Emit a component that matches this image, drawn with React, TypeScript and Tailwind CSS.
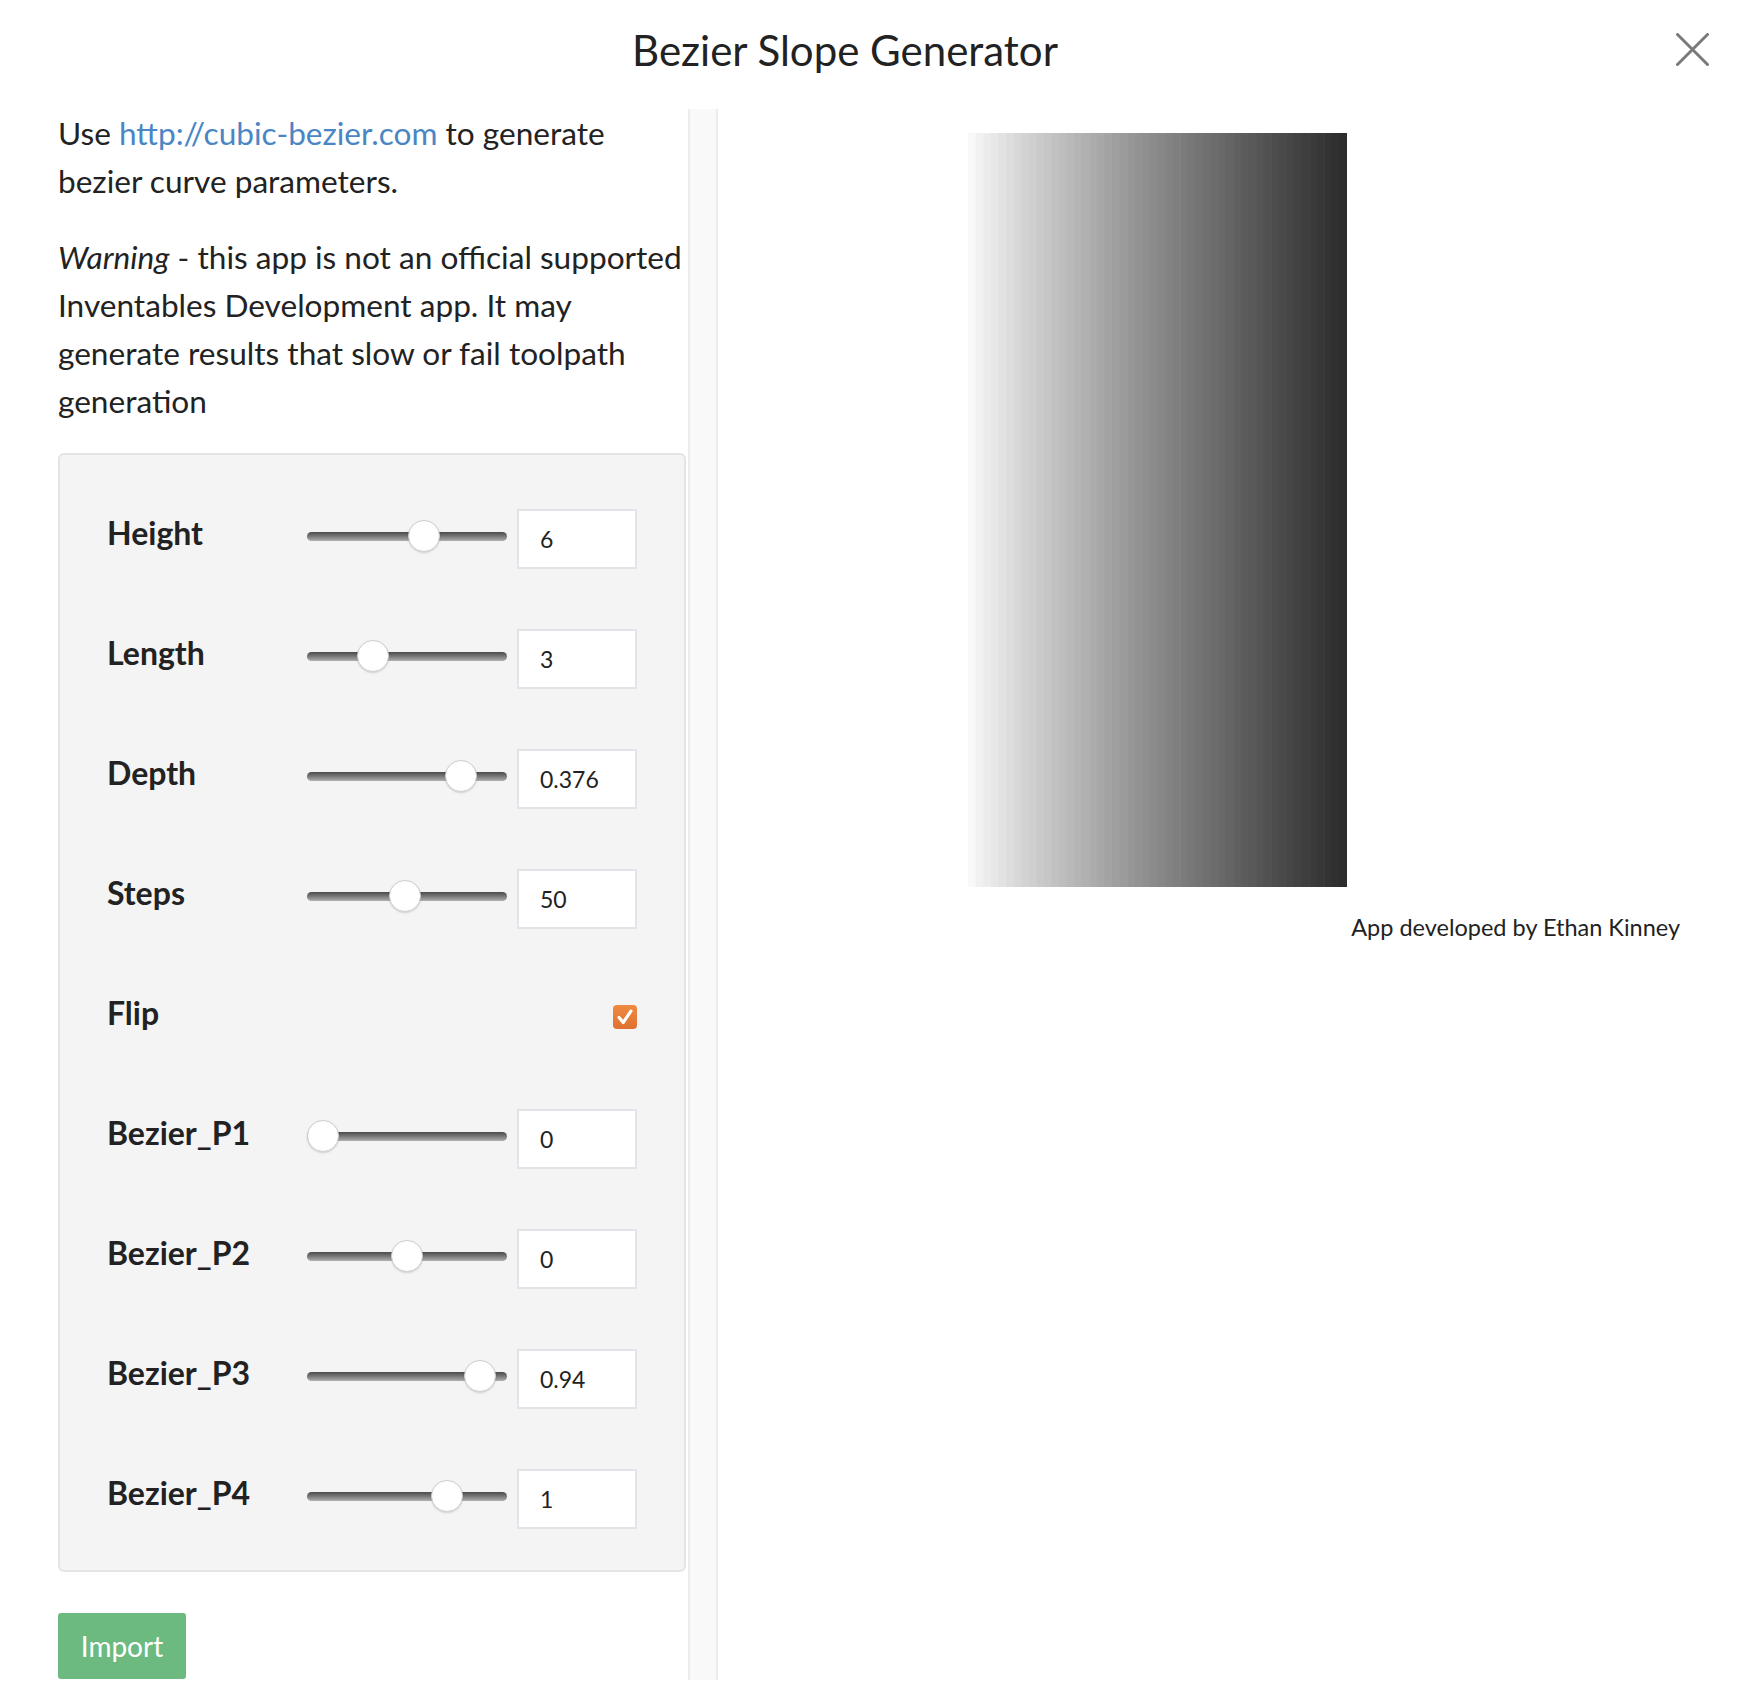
import React from "react";

const rows: { label: string; value?: string; pos?: number; checkbox?: boolean }[] = [
  { label: "Height", value: "6", pos: 0.6 },
  { label: "Length", value: "3", pos: 0.3 },
  { label: "Depth", value: "0.376", pos: 0.82 },
  { label: "Steps", value: "50", pos: 0.49 },
  { label: "Flip", checkbox: true },
  { label: "Bezier_P1", value: "0", pos: 0 },
  { label: "Bezier_P2", value: "0", pos: 0.5 },
  { label: "Bezier_P3", value: "0.94", pos: 0.935 },
  { label: "Bezier_P4", value: "1", pos: 0.74 },
];

function Slider({ pos }: { pos: number }) {
  return (
    <div className="relative w-[200px] h-[32px] mb-[6px] flex items-center">
      <div className="w-full h-[9px] rounded-full bg-gradient-to-b from-[#4a4a4a] to-[#b0b0b0]" />
      <div
        className="absolute top-0 w-[32px] h-[32px] rounded-full bg-white border border-[#cfcfcf] shadow-[0_1px_2px_rgba(0,0,0,0.15)]"
        style={{ left: `${pos * 168}px` }}
      />
    </div>
  );
}

function GradientBox() {
  const steps = 50;
  const w = 379;
  const h = 754;
  const rects = [];
  for (let i = 0; i < steps; i++) {
    const t = i / (steps - 1);
    const f = Math.pow(t, 0.88);
    const v = Math.round(248 - (248 - 44) * f);
    rects.push(
      <rect
        key={i}
        x={(i * w) / steps}
        y={0}
        width={w / steps + 0.6}
        height={h}
        fill={`rgb(${v},${v},${v})`}
      />
    );
  }
  return (
    <svg width={w} height={h} viewBox={`0 0 ${w} ${h}`} className="block">
      {rects}
    </svg>
  );
}

export default function App() {
  return (
    <div
      className="w-[1738px] min-h-[1706px] bg-white text-[#222]"
      style={{ fontFamily: "Lato, 'Open Sans', sans-serif" }}
    >
      <div className="relative h-[109px] flex items-center justify-center pb-[8px] pr-[48px]">
        <h1 className="text-[42px] font-normal text-[#222]">Bezier Slope Generator</h1>
        <button className="absolute right-[29px] top-[33px] w-[33px] h-[33px]">
          <svg viewBox="0 0 33 33" width="33" height="33">
            <path d="M1.5 1.5 L31.5 31.5 M31.5 1.5 L1.5 31.5" stroke="#7a7a7a" strokeWidth="3" strokeLinecap="round" />
          </svg>
        </button>
      </div>

      <div className="flex items-stretch">
        <div className="ml-[58px] w-[628px] pb-[1px]">
          <p className="text-[31.6px] leading-[48px] whitespace-nowrap">
            Use <a className="text-[#4a86c4]">http://cubic-bezier.com</a> to generate
            <br />
            bezier curve parameters.
          </p>
          <p className="mt-[28px] text-[31.6px] leading-[48px] whitespace-nowrap">
            <em>Warning</em> - this app is not an official supported
            <br />
            Inventables Development app. It may
            <br />
            generate results that slow or fail toolpath
            <br />
            generation
          </p>

          <div className="mt-[28px] bg-[#f4f4f4] border-2 border-[#e4e4e4] rounded-[6px] pl-[47px] pr-[47px] pt-[54px] pb-[41px] flex flex-col gap-[60px]">
            {rows.map((r) => (
              <div key={r.label} className="flex items-center h-[60px]">
                <div className="w-[200px] text-[32px] leading-[40px] font-bold pb-[12px]">{r.label}</div>
                {r.checkbox ? (
                  <div className="flex-1 flex justify-end pr-[0px] mb-[4px]">
                    <div className="w-[24px] h-[24px] rounded-[4px] bg-gradient-to-b from-[#ee8a42] to-[#df7130] flex items-center justify-center">
                      <svg viewBox="0 0 24 24" width="22" height="22">
                        <path d="M5.5 12.5 L10 18 L18.5 5.5" fill="none" stroke="white" strokeWidth="3.4" strokeLinecap="round" strokeLinejoin="round" />
                      </svg>
                    </div>
                  </div>
                ) : (
                  <>
                    <Slider pos={r.pos ?? 0} />
                    <div className="ml-[10px] w-[120px] h-[60px] bg-white border-2 border-[#e3e3ea] flex items-center pl-[21px] text-[23px] text-[#222]">
                      {r.value}
                    </div>
                  </>
                )}
              </div>
            ))}
          </div>

          <button className="mt-[41px] w-[128px] h-[66px] rounded-[3px] bg-[#6cba80] text-white text-[28px] flex items-center justify-center">
            Import
          </button>
        </div>

        <div className="ml-[2px] w-[30px] bg-[#f9f9f9] border-x-2 border-[#ececec]" />

        <div className="flex-1 pt-[24px]">
          <div className="ml-[250px]">
            <GradientBox />
          </div>
          <div className="mt-[25px] pr-[58px] text-right text-[23.5px] leading-[30px] text-[#222]">
            App developed by Ethan Kinney
          </div>
        </div>
      </div>
    </div>
  );
}
